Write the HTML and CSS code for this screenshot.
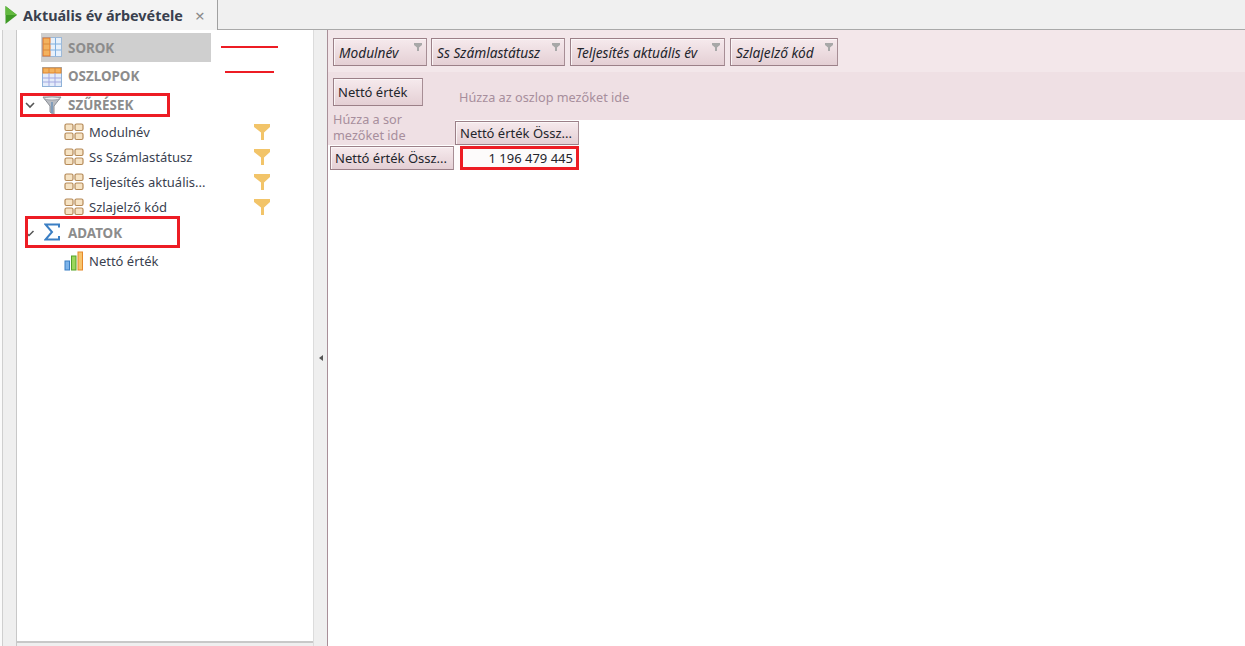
FILE: index.html
```html
<!DOCTYPE html>
<html lang="hu">
<head>
<meta charset="utf-8">
<title>Aktuális év árbevétele</title>
<link rel="stylesheet" href="styles.css">
</head>
<body>
<svg class="defs" width="0" height="0" aria-hidden="true">
  <symbol id="fld" viewBox="0 0 20 20">
    <g fill="#f6e3c4" stroke="#b58a58" stroke-width="1.2">
      <rect x="1" y="2" width="8" height="6.5" rx="1.5"/><rect x="11" y="2" width="8" height="6.5" rx="1.5"/>
      <rect x="1" y="11" width="8" height="6.5" rx="1.5"/><rect x="11" y="11" width="8" height="6.5" rx="1.5"/>
    </g>
  </symbol>
  <symbol id="fun" viewBox="0 0 16 16">
    <path d="M0 0H16V3L10 8.500V16H7V8.500L0 3Z" fill="#f2c469"/>
  </symbol>
</svg>

<header class="tabbar">
  <div class="tab">
    <svg class="tab-play" width="12" height="18" viewBox="0 0 12 18"><path d="M.5 0 12 9 .5 18Z" fill="#3f9a26"/><path d="M.5 0 12 9H.5Z" fill="#62b93f"/></svg>
    <span class="tab-title">Aktuális év árbevétele</span>
    <span class="tab-close">×</span>
  </div>
</header>

<main class="workspace">
  <div class="side-strip"></div>
  <section class="tree">
    <div class="tree-row head selected">
      <svg class="ico" width="20" height="20" viewBox="0 0 20 20"><rect x=".5" y=".5" width="19" height="19" fill="#e8f1fb" stroke="#9db9d8"/><rect x="1" y="1" width="7" height="18" fill="#f3b25e" stroke="#e2762b"/><path d="M8 7H19M8 13H19M13.500 1V19" stroke="#7fb0e0"/><path d="M1 7H8M1 13H8" stroke="#d98a3c"/></svg>
      <span class="head-label">SOROK</span>
    </div>
    <div class="tree-row head">
      <svg class="ico" width="20" height="20" viewBox="0 0 20 20"><rect x=".5" y=".5" width="19" height="19" fill="#e4ecfa" stroke="#8fb2d8"/><rect x="1" y="1" width="18" height="5" fill="#f3b25e" stroke="#e2862b"/><path d="M1 11H19M1 15H19M7 6V19M13 6V19" stroke="#a3a8e0"/><path d="M7 1V6M13 1V6" stroke="#d98a3c"/></svg>
      <span class="head-label">OSZLOPOK</span>
    </div>
    <div class="tree-row head">
      <svg class="chev" width="10" height="7" viewBox="0 0 10 7"><path d="M1 1 5 5 9 1" fill="none" stroke="#555" stroke-width="1.600"/></svg>
      <svg class="ico" width="20" height="20" viewBox="0 0 20 20"><path d="M1 1H19L12 10V19L8 16V10Z" fill="#b9bcc2" stroke="#8b8f96"/><ellipse cx="10" cy="2.500" rx="8" ry="1.500" fill="#eceef0" stroke="#8b8f96" stroke-width=".7"/><path d="M10 6V17" stroke="#6f93b8" stroke-width="1.500"/></svg>
      <span class="head-label">SZŰRÉSEK</span>
    </div>
    <div class="tree-row field"><svg class="fld"><use href="#fld"/></svg><span class="field-name">Modulnév</span><svg class="fun"><use href="#fun"/></svg></div>
    <div class="tree-row field"><svg class="fld"><use href="#fld"/></svg><span class="field-name">Ss Számlastátusz</span><svg class="fun"><use href="#fun"/></svg></div>
    <div class="tree-row field"><svg class="fld"><use href="#fld"/></svg><span class="field-name">Teljesítés aktuális...</span><svg class="fun"><use href="#fun"/></svg></div>
    <div class="tree-row field"><svg class="fld"><use href="#fld"/></svg><span class="field-name">Szlajelző kód</span><svg class="fun"><use href="#fun"/></svg></div>
    <div class="tree-row head adatok">
      <svg class="chev" width="10" height="7" viewBox="0 0 10 7"><path d="M2 3.500 4 5.500 8.500 1" fill="none" stroke="#555" stroke-width="1.500"/></svg>
      <svg class="ico" width="16" height="18" viewBox="0 0 16 18"><path d="M15 4.500V1.500H1.500L8 9 1.500 16.500H15V13" fill="none" stroke="#3b7fc4" stroke-width="2"/></svg>
      <span class="head-label">ADATOK</span>
    </div>
    <div class="tree-row field data">
      <svg class="fld" viewBox="0 0 20 20"><rect x="1" y="10" width="4.500" height="9" fill="#7db4ea" stroke="#3b7fc4"/><rect x="7.500" y="5" width="4.500" height="14" fill="#9bd65c" stroke="#55a327"/><rect x="14" y="1" width="4.500" height="18" fill="#f8c46c" stroke="#e5892b"/></svg>
      <span class="field-name">Nettó érték</span>
    </div>
    <div class="tree-foot"></div>
  </section>
  <div class="splitter"><span class="split-arrow"></span></div>

  <section class="pivot">
    <div class="filter-band">
      <div class="pbtn filter w94">Modulnév<svg class="mini" viewBox="0 0 8 8"><path d="M0 0H8V2L5 4.500V8H3V4.500L0 2Z" fill="#a8a8a8"/></svg></div>
      <div class="pbtn filter w134">Ss Számlastátusz<svg class="mini" viewBox="0 0 8 8"><path d="M0 0H8V2L5 4.500V8H3V4.500L0 2Z" fill="#a8a8a8"/></svg></div>
      <div class="pbtn filter w155">Teljesítés aktuális év<svg class="mini" viewBox="0 0 8 8"><path d="M0 0H8V2L5 4.500V8H3V4.500L0 2Z" fill="#a8a8a8"/></svg></div>
      <div class="pbtn filter w108">Szlajelző kód<svg class="mini" viewBox="0 0 8 8"><path d="M0 0H8V2L5 4.500V8H3V4.500L0 2Z" fill="#a8a8a8"/></svg></div>
    </div>
    <div class="data-band">
      <div class="pbtn data-btn">Nettó érték</div>
      <span class="hint col-hint">Húzza az oszlop mezőket ide</span>
    </div>
    <div class="grid-row first">
      <div class="row-hint hint"><span class="row-hint-text">Húzza a sor<br>mezőket ide</span></div>
      <div class="pbtn col-head">Nettó érték Össz...</div>
    </div>
    <div class="grid-row second">
      <div class="pbtn row-head">Nettó érték Össz...</div>
      <div class="cell">1 196 479 445</div>
    </div>
  </section>
</main>

<i class="mark line-a"></i>
<i class="mark line-b"></i>
<i class="mark box box-a"></i>
<i class="mark box box-b"></i>
<i class="mark box box-c"></i>
</body>
</html>
```

FILE: styles.css
```css
* { box-sizing: border-box; }
html, body { margin: 0; height: 100%; overflow: hidden; }
body {
  position: relative;
  width: 1245px;
  height: 646px;
  background: #fff;
  color: #2f3440;
  font-family: "Noto Sans", "Liberation Sans", Arial, sans-serif;
  font-size: 13px;
  display: flex;
  flex-direction: column;
}
.defs { position: absolute; }

.tabbar {
  height: 30px;
  flex: none;
  background: #f0f0f0;
  border-bottom: 1px solid #a9a9a9;
  display: flex;
}
.tab {
  width: 218px;
  height: 30px;
  background: #f3f3f3;
  border-right: 1px solid #a0a0a0;
  display: flex;
  align-items: center;
  padding-left: 5px;
}
.tab-play { flex: none; margin-right: 6px; }
.tab-title { font-weight: 700; font-size: 14.400px; color: #39404e; white-space: nowrap; }
.tab-close { margin-left: 12px; font-size: 17px; color: #8a8a8a; line-height: 1; }

.workspace { flex: 1; display: flex; min-height: 0; }
.side-strip {
  width: 17px;
  flex: none;
  background: #efefef;
  border-right: 1px solid #c8c8c8;
  box-shadow: inset 2px 0 0 #fafafa, inset 3px 0 0 #cfcfcf;
}
.tree {
  width: 297px;
  flex: none;
  background: #fff;
  border-right: 1px solid #dcdcdc;
  display: flex;
  flex-direction: column;
  padding-top: 3px;
}
.tree-row { display: flex; align-items: center; flex: none; white-space: nowrap; }
.head { height: 28.500px; padding-left: 24px; position: relative; }
.head .ico { flex: none; position: absolute; left: 25px; top: 5px; }
.head .chev { position: absolute; left: 8px; top: 11px; }
.head-label { margin-left: 27px; font-weight: 700; color: #8c8c8c; font-size: 13.400px; }
.head.selected { height: 29px; margin-left: 24px; padding-left: 0; width: 170px; background: #cfcfcf; }
.head.selected .ico { left: 1px; top: 4px; }
.head.selected .head-label { margin-left: 27px; }
.head.adatok { height: 28px; }
.head.adatok .ico { left: 27px; top: 4px; }
.head.adatok .chev { top: 11px; }

.field { height: 25px; padding-left: 47px; position: relative; }
.field.data { height: 28px; }
.fld { width: 20px; height: 20px; flex: none; }
.fun { width: 16px; height: 16px; position: absolute; left: 237px; top: 5px; }
.field-name { margin-left: 5px; color: #3a3f50; }

.tree-foot {
  margin-top: auto;
  height: 5px;
  background: #efefef;
  border-top: 2px solid #c8c8c8;
}

.splitter {
  width: 13px;
  flex: none;
  background: #efefef;
  display: flex;
  align-items: center;
  justify-content: center;
  padding-top: 40px;
}
.split-arrow {
  width: 0;
  height: 0;
  border-style: solid;
  border-width: 3.500px 4px 3.500px 0;
  border-color: transparent #555 transparent transparent;
}

.pivot {
  flex: 1;
  min-width: 0;
  border-left: 1px solid #a88f98;
  background: #fff;
}
.filter-band {
  height: 42px;
  background: #f3e7ea;
  padding: 8px 0 0 5px;
  display: flex;
}
.pbtn {
  background: linear-gradient(#f6eaed, #e4cfd4);
  border: 1px solid #9b8088;
  border-right-color: #a78e95;
  box-shadow: inset 1px 1px 0 #fbf6f7;
  color: #23252c;
  white-space: nowrap;
  display: flex;
  align-items: center;
  padding-left: 4px;
}
.filter { height: 28px; font-style: italic; font-size: 13.700px; padding-left: 5px; position: relative; margin-right: 4px; }
.w94 { width: 94px; }
.w134 { width: 134px; margin-right: 5px; }
.w155 { width: 155px; margin-right: 5px; }
.w108 { width: 108px; }
.mini { position: absolute; right: 4px; top: 4px; width: 8px; height: 8px; }

.data-band {
  height: 48px;
  background: #efe0e4;
  padding: 6px 0 0 5px;
  display: flex;
}
.data-btn { width: 90px; height: 28px; }
.hint { color: #a78e9c; font-size: 12.700px; }
.col-hint { margin: 10px 0 0 36px; }

.grid-row { display: flex; }
.grid-row.first { height: 25px; }
.row-hint {
  width: 127px;
  height: 25px;
  background: #efe0e4;
  line-height: 16px;
  padding-left: 5px;
}
.row-hint-text { display: block; margin-top: -9px; }
.col-head { width: 124px; height: 24px; margin-top: 1px; }
.grid-row.second { height: 25px; }
.row-head { width: 124px; height: 24px; margin: 1px 0 0 2px; }
.cell {
  width: 125px;
  height: 25px;
  text-align: right;
  padding: 4px 6px 0 0;
  color: #23252c;
  background: #fdfbfb;
}

.mark { position: absolute; display: block; }
.line-a { left: 221px; top: 46px; width: 57px; height: 2px; background: #ed1c24; }
.line-b { left: 225px; top: 71px; width: 49px; height: 2px; background: #ed1c24; }
.box { border: 3px solid #ed1c24; }
.box-a { left: 20px; top: 93px; width: 150px; height: 24px; }
.box-b { left: 25px; top: 216px; width: 155px; height: 32px; }
.box-c { left: 460px; top: 146px; width: 119px; height: 24px; }
```
